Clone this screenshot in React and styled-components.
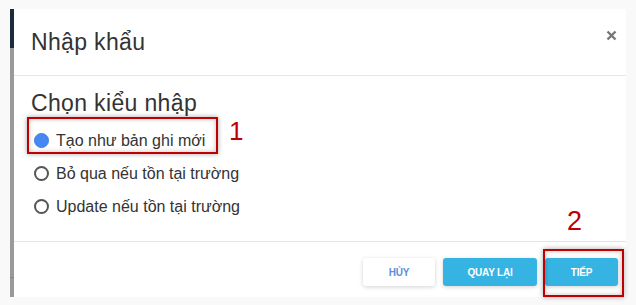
import styled, { createGlobalStyle } from 'styled-components'

const Global = createGlobalStyle`
  html, body {
    margin: 0;
    padding: 0;
    background: #f9f9f9;
  }
  body {
    font-family: "Liberation Sans", Arial, sans-serif;
    color: #333;
  }
`

const options = [
  { label: 'Tạo như bản ghi mới', checked: true },
  { label: 'Bỏ qua nếu tồn tại trường' },
  { label: 'Update nếu tồn tại trường' },
]

const App = () => {
  return (
    <>
      <Global />
      <Page>
        <Strip />
        <Modal>
          <Header>
            <Title>Nhập khẩu</Title>
            <Close aria-label="close">
              <svg width="11" height="11" viewBox="0 0 11 11">
                <path d="M1.5 1.5 L9.5 9.5 M9.5 1.5 L1.5 9.5" stroke="#777" strokeWidth="2.4" strokeLinecap="butt" />
              </svg>
            </Close>
          </Header>
          <Body>
            <Heading>Chọn kiểu nhập</Heading>
            <OptionList>
              {options.map((o, i) => (
                <Option key={o.label}>
                  <Radio checked={o.checked} />
                  <span>{o.label}</span>
                  {i === 0 && (
                    <>
                      <Mark className="first" />
                      <Step className="one">1</Step>
                    </>
                  )}
                </Option>
              ))}
            </OptionList>
          </Body>
          <Footer>
            <Button variant="plain" w={72}>Hủy</Button>
            <Button w={94}>Quay lại</Button>
            <NextWrap>
              <Button w={73}>Tiếp</Button>
              <Mark className="second" />
              <Step className="two">2</Step>
            </NextWrap>
          </Footer>
        </Modal>
      </Page>
    </>
  )
}

export default App

const Page = styled.div`
  display: flex;
  padding: 9px 0 8px 10px;
  width: 636px;
  height: 305px;
  box-sizing: border-box;
`

const Strip = styled.div`
  width: 4px;
  background: linear-gradient(
    to bottom,
    #1c2b3b 0,
    #1c2b3b 39px,
    #9a9a9a 39px,
    #9a9a9a 268px,
    #858585 268px,
    #858585 269px,
    #9a9a9a 269px
  );
`

const Modal = styled.div`
  width: 612px;
  height: 288px;
  background: #fff;
  display: flex;
  flex-direction: column;
`

const Header = styled.div`
  height: 66px;
  display: flex;
  align-items: center;
  justify-content: space-between;
  padding: 0 9px 0 17px;
  border-bottom: 1px solid #e6e6e6;
`

const Title = styled.h4`
  margin: 0;
  font-size: 23px;
  font-weight: 400;
  line-height: 26px;
  letter-spacing: 0.35px;
  color: #333;
`

const Close = styled.button`
  border: 0;
  background: none;
  padding: 0;
  margin-top: -14px;
  width: 11px;
  height: 11px;
  display: flex;
  cursor: pointer;
`

const Body = styled.div`
  flex: 1;
  padding: 14px 17px 0 17px;
`

const Heading = styled.h3`
  margin: 0;
  font-size: 23px;
  font-weight: 400;
  line-height: 26px;
  letter-spacing: 0.35px;
  color: #333;
`

const OptionList = styled.div`
  display: flex;
  flex-direction: column;
  margin-top: 15px;
  gap: 14px;
`

const Option = styled.label`
  position: relative;
  display: flex;
  align-items: center;
  gap: 7px;
  height: 19px;
  padding-left: 3px;
  font-size: 16px;
  color: #333;
`

const Radio = styled.span`
  width: 15px;
  height: 15px;
  box-sizing: border-box;
  border-radius: 50%;
  flex: none;
  border: ${p => (p.checked ? '1px solid #3f7fea' : '2px solid #555')};
  background: ${p => (p.checked ? '#4688f1' : '#fff')};
`

const Mark = styled.span`
  position: absolute;
  border: 2px solid #c00000;
  box-shadow: 0 0 5px rgba(0, 0, 0, 0.35), inset 0 0 5px rgba(0, 0, 0, 0.25);
  pointer-events: none;

  &.first {
    left: -4px;
    top: -14px;
    width: 187px;
    height: 33px;
  }
  &.second {
    left: -2px;
    top: -9px;
    width: 77px;
    height: 44px;
  }
`

const Step = styled.span`
  position: absolute;
  color: #c00000;
  font-size: 26px;
  line-height: 26px;

  &.one {
    left: 198px;
    top: -13px;
  }
  &.two {
    left: 22px;
    top: -50px;
    font-size: 27px;
  }
`

const Footer = styled.div`
  display: flex;
  justify-content: flex-end;
  align-items: flex-start;
  gap: 8px;
  height: 56px;
  box-sizing: border-box;
  padding: 16px 8px 0 0;
  border-top: 1px solid #e6e6e6;
`

const NextWrap = styled.div`
  position: relative;
  display: flex;
`

const Button = styled.button`
  height: 28px;
  width: ${p => p.w}px;
  padding: 0;
  border: 0;
  border-radius: 3px;
  font-family: "Liberation Sans", Arial, sans-serif;
  font-size: 10px;
  font-weight: 700;
  text-transform: uppercase;
  letter-spacing: -0.2px;
  cursor: pointer;
  background: ${p => (p.variant === 'plain' ? '#fff' : '#35b4e3')};
  color: ${p => (p.variant === 'plain' ? '#5a8fdb' : '#fff')};
  box-shadow: 0 1px 4px rgba(0, 0, 0, 0.18);
`
